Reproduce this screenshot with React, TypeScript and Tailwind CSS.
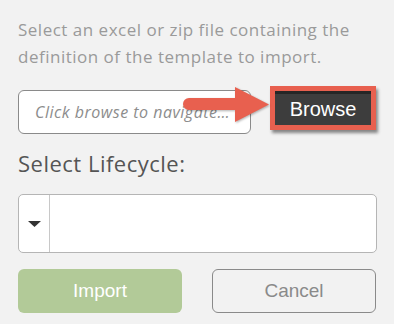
import React from "react";

export default function App() {
  return (
    <div className="w-[394px] h-[324px] bg-[#f2f2f2] overflow-hidden px-[18px] pt-[16px]" style={{ fontFamily: "'Open Sans', Lato, sans-serif" }}>
      <p className="text-[17px] leading-[27px] tracking-[0.5px] text-[#9a9a9a] w-[360px]">
        Select an excel or zip file containing the definition of the template to import.
      </p>
      <div className="relative flex items-start mt-[16px]">
        <div className="mt-[4px] w-[233px] h-[44px] bg-white border border-[#8a8a8a] rounded-[6px] flex items-center pl-[16px] pr-[16px]">
          <span className="italic text-[16px] tracking-[0.5px] text-[#8c8c8c] truncate">Click browse to navigate to file</span>
        </div>
        <div className="ml-[19px] w-[113px] h-[44px] border-[5px] border-[#e8604f] bg-[#3d3d3d] shadow-[2px_3px_3px_rgba(0,0,0,0.45)] flex">
          <div className="flex-1 border-t-[3px] border-[#262626] flex items-center justify-center text-white text-[20px] pb-[1px]" style={{ fontFamily: "'Liberation Sans', Arial, sans-serif" }}>
            Browse
          </div>
        </div>
        <svg className="absolute left-[165px] top-[1px] drop-shadow-[1px_1px_1px_rgba(0,0,0,0.3)]" width="87" height="36" viewBox="0 0 87 36">
          <path d="M6 11 H52 V0 L86 17.5 L52 35 V23 H6 A6 6 0 0 1 6 11 Z" fill="#e8604f" />
        </svg>
      </div>
      <div className="mt-[14px] text-[22px] leading-[30px] tracking-[0.5px] text-[#555555]">Select Lifecycle:</div>
      <div className="mt-[16px] w-[359px] h-[59px] bg-white border border-[#b5b5b5] rounded-[5px] flex">
        <div className="w-[31px] border-r border-[#c8c8c8] flex items-center justify-center">
          <svg width="13" height="6" viewBox="0 0 13 6">
            <path d="M0 0 H13 L6.5 6 Z" fill="#333" />
          </svg>
        </div>
        <div className="flex-1" />
      </div>
      <div className="mt-[16px] flex gap-[30px]" style={{ fontFamily: "'Liberation Sans', Arial, sans-serif" }}>
        <button className="w-[165px] h-[44px] rounded-[6px] bg-[#b2ca98] text-white text-[19px]">Import</button>
        <button className="w-[165px] h-[44px] rounded-[6px] border border-[#8a8a8a] text-[#8a8a8a] text-[19px]">Cancel</button>
      </div>
    </div>
  );
}
